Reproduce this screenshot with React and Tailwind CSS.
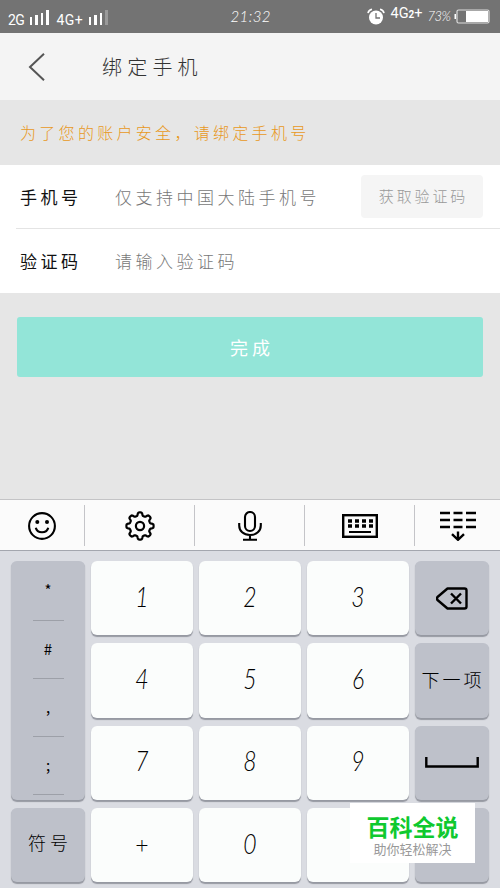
import clsx from 'clsx'

const KEYS = [
  ['1', '2', '3'],
  ['4', '5', '6'],
  ['7', '8', '9'],
  ['+', '0', ''],
]
const SYMBOLS = ['*', '#', ',', ';']

// Outline of the settings cog: eight soft teeth around (15, 15)
const COG = Array.from({ length: 160 }, (_, n) => {
  const a = (n / 160) * Math.PI * 2
  const r = 12 + 1.6 * Math.tanh(2.4 * Math.cos(8 * a))
  return `${n ? 'L' : 'M'}${(15 + r * Math.cos(a)).toFixed(2)} ${(15 + r * Math.sin(a)).toFixed(2)}`
}).join('') + 'Z'

export default function App() {
  return (
    <div className="relative flex h-[888px] w-[500px] flex-col overflow-hidden bg-[#e6e6e6] font-['Noto_Sans_CJK_SC',sans-serif] font-light">
      <StatusBar />

      <header className="flex h-[67px] shrink-0 items-center bg-[#f4f4f4] pl-7">
        <svg width="18" height="30" viewBox="0 0 18 30" fill="none" stroke="#555" strokeWidth="2">
          <path d="M16 1.8 2 15l14 13.2" />
        </svg>
        <h1 className="ml-14 text-[20px] leading-none tracking-[5.2px] text-[#333]">绑定手机</h1>
      </header>

      <p className="flex h-[65px] shrink-0 items-center pb-0.5 pl-5 text-[16px] tracking-[3.3px] text-[#e8981c]">
        为了您的账户安全，请绑定手机号
      </p>

      <section className="h-32 shrink-0 bg-white text-[17px] tracking-[3.5px]">
        <div className="ml-4 flex h-16 items-center border-b border-[#e4e4e4] pl-1">
          <Field label="手机号" hint="仅支持中国大陆手机号" />
          <button className="mr-[17px] h-[43px] w-[122px] rounded-sm bg-[#f5f5f5] pl-[3px] text-[15px] tracking-[2.9px] text-[#999]">
            获取验证码
          </button>
        </div>
        <div className="flex h-16 items-center pl-5">
          <Field label="验证码" hint="请输入验证码" />
        </div>
      </section>

      <button className="mx-[17px] mt-6 h-[60px] shrink-0 rounded-[3px] bg-[#93e5d8] pl-1 text-[18px] font-normal tracking-[4px] text-white">
        完成
      </button>

      <Keyboard />

      <div className="absolute top-[803px] left-[350px] flex h-[60px] w-[125px] flex-col items-center bg-white pt-[11px]">
        <div className="text-[23px] leading-[25px] font-bold text-[#0fc92f]">百科全说</div>
        <div className="mt-0.5 text-[13px] leading-[15px] font-normal text-[#999]">助你轻松解决</div>
      </div>
    </div>
  )
}

function StatusBar() {
  return (
    <div className="flex h-[33px] shrink-0 items-center bg-[#737373] pl-2 font-['Roboto',sans-serif] text-[14px] leading-none font-normal text-white">
      <span className="mt-1.5 w-[21.5px] tracking-[-0.5px]">2G</span>
      <Signal />
      <span className="mt-1.5 ml-[7px] w-8 tracking-[0.4px]">4G+</span>
      <Signal dim />
      <span className="ml-[122px] w-[136px] font-['Lato',sans-serif] text-[15px] font-light tracking-[0.4px] italic">
        21:32
      </span>
      <svg className="shrink-0" width="18" height="18" viewBox="0 0 18 18" fill="none">
        <circle cx="9" cy="9.5" r="7" fill="#fff" />
        <path d="M1 5.2C1.4 3.2 2.8 1.8 5 1.3M17 5.2c-.4-2-1.8-3.4-4-3.9" stroke="#fff" strokeWidth="1.6" />
        <path d="M9 5v5h4" stroke="#737373" strokeWidth="1.3" />
      </svg>
      <span className="mb-1 ml-1.5 w-[37px] text-[14.5px] whitespace-nowrap">
        4G<span className="text-[10px] font-bold">2</span>+
      </span>
      <span className="w-[26px] font-['Lato',sans-serif] text-[13px] font-light tracking-[-0.5px] italic">73%</span>
      <svg className="shrink-0" width="36" height="15" viewBox="0 0 36 15">
        <rect x="3" y="1" width="32" height="13" rx="1.5" fill="#737373" stroke="#ddd" strokeWidth="1.2" />
        <path d="M2 5H.5v5H2zM12 2h22v11H12z" fill="#fff" />
      </svg>
    </div>
  )
}

function Signal({ dim }) {
  return (
    <div className="mt-0.5 flex h-[15px] w-5 items-end gap-[3px]">
      <i className="h-2 w-[2.5px] bg-white" />
      <i className="h-2.5 w-[2.5px] bg-white" />
      <i className="h-3 w-[2.5px] bg-white" />
      <i className={clsx('h-[15px] w-[2.5px]', dim ? 'bg-[#999]' : 'bg-white')} />
    </div>
  )
}

function Field({ label, hint }) {
  return (
    <>
      <span className="w-[95px] font-normal text-[#111]">{label}</span>
      <span className="flex-1 whitespace-nowrap text-[#777]">{hint}</span>
    </>
  )
}

function Keyboard() {
  return (
    <div className="mt-[122px] flex flex-1 flex-col border-t border-[#c4c4c6] bg-[#dadce2]">
      <Toolbar />
      <div className="grid grid-cols-[74px_102px_102px_102px_74px] gap-x-1.5 px-[11px] pt-2.5">
        <div className="flex flex-col gap-2">
          <div className="flex h-[238.5px] flex-col items-center rounded-md bg-[#bec1ca] text-[15px] font-normal text-black shadow-[0_1.5px_1px_#9699a2]">
            {SYMBOLS.map((s) => (
              <div
                key={s}
                className="flex h-[58px] w-[31px] shrink-0 items-center justify-center border-b border-[#9da0a8] first:h-[60px]"
              >
                {s}
              </div>
            ))}
          </div>
          <Key dark className="pb-1 pl-1 text-[18px] tracking-[4px]">符号</Key>
        </div>

        {[0, 1, 2].map((col) => (
          <div key={col} className="flex flex-col gap-2">
            {KEYS.map((row, r) => (
              <Key key={r} className="pb-0.5 font-['Lato',sans-serif] text-[27px] font-light">
                <span className={row[col] === '+' ? 'text-[23px]' : 'inline-block scale-x-85 italic'}>
                  {row[col]}
                </span>
              </Key>
            ))}
          </div>
        ))}

        <div className="flex flex-col gap-2">
          <Key dark>
            <svg width="32" height="23" viewBox="0 0 32 23" fill="none" stroke="#000" strokeWidth="2.4" strokeLinejoin="round">
              <path d="M11.5 1.5h17a2 2 0 0 1 2 2v16a2 2 0 0 1-2 2h-17L1.5 13q-1-1.5 0-3z" />
              <path d="m15 6.5 10 10m0-10-10 10" />
            </svg>
          </Key>
          <Key dark className="pb-0.5 pl-0.5 text-[18px] tracking-[3px]">下一项</Key>
          <Key dark>
            <svg width="54" height="11" viewBox="0 0 54 11" fill="none" stroke="#000" strokeWidth="2.4">
              <path d="M1.3 0v9.5h51.4V0" />
            </svg>
          </Key>
          <Key dark />
        </div>
      </div>
    </div>
  )
}

function Key({ dark, className, children }) {
  return (
    <div
      className={clsx(
        'flex h-[74.25px] items-center justify-center rounded-md text-black shadow-[0_1.5px_1px_#9699a2]',
        dark ? 'bg-[#bec1ca]' : 'bg-[#fbfdfc]',
        className,
      )}
    >
      {children}
    </div>
  )
}

function Toolbar() {
  return (
    <div className="flex h-[51px] shrink-0 items-center border-b border-[#a3a6ae] bg-[#fbfbfb]">
      <Tool className="w-[85px]">
        <svg width="28" height="28" viewBox="0 0 28 28" fill="none" stroke="#000" strokeWidth="2.1">
          <circle cx="14" cy="14" r="12.9" />
          <path d="M7.8 15.8c1.2 6 11.2 6 12.4 0" />
          <circle cx="9.3" cy="10" r="2" fill="#000" stroke="none" />
          <circle cx="19" cy="10" r="2" fill="#000" stroke="none" />
        </svg>
      </Tool>
      <Tool className="w-[110px]">
        <svg width="30" height="30" viewBox="0 0 30 30" fill="none" stroke="#000" strokeWidth="2.2">
          <path d={COG} strokeLinejoin="round" />
          <circle cx="15" cy="15" r="4.1" />
        </svg>
      </Tool>
      <Tool className="w-[110px]">
        <svg width="24" height="30" viewBox="0 0 24 30" fill="none" stroke="#000" strokeWidth="2.1">
          <rect x="7" y="1" width="10" height="19" rx="5" />
          <path d="M1.2 12v2.5C1.2 20 5.5 24 12 24s10.8-4 10.8-9.5V12M12 24v4.5M5 28.8h14" />
        </svg>
      </Tool>
      <Tool className="w-[110px]">
        <svg width="36" height="24" viewBox="0 0 36 24" fill="none" stroke="#000">
          <rect x="1.2" y="1.2" width="33.6" height="21.6" strokeWidth="2.4" />
          <path d="M6 7h4m3 0h4m3 0h4m3 0h4M6 12h4m3 0h4m3 0h4m3 0h4" strokeWidth="3.6" />
          <path d="M7 18h22" strokeWidth="2" />
        </svg>
      </Tool>
      <Tool className="w-[85px]">
        <svg width="38" height="30" viewBox="0 0 38 30" fill="none" stroke="#000" strokeWidth="2.4">
          <path d="M1 2h10m3.5 0h9M27 2h10M1 9h10m3.5 0h9M27 9h10M1 16h10m3.5 0h9M27 16h10" />
          <path d="M19 20.5V29m-6-5.8 6 5.6 6-5.6" />
        </svg>
      </Tool>
    </div>
  )
}

function Tool({ className, children }) {
  return (
    <div className={clsx('flex h-[41px] items-center justify-center border-r border-[#c4c4c8] pt-0.5 last:border-0', className)}>
      {children}
    </div>
  )
}
